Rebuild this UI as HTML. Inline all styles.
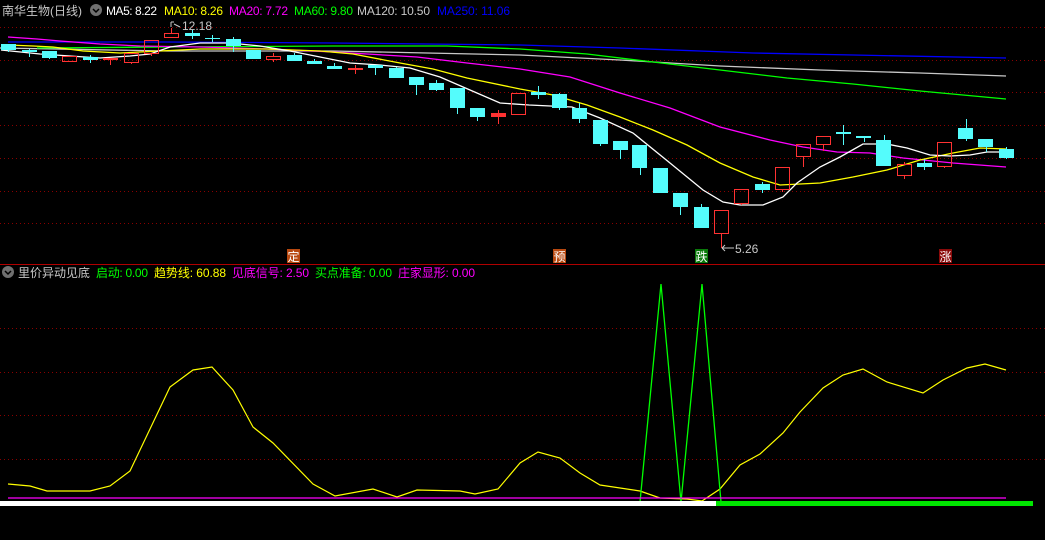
<!DOCTYPE html>
<html><head><meta charset="utf-8"><style>
html,body{margin:0;padding:0;background:#000;width:1045px;height:540px;overflow:hidden}
svg{display:block}
text{font-family:"Liberation Sans","Noto Sans CJK SC",sans-serif}
</style></head><body>
<svg width="1045" height="540" viewBox="0 0 1045 540" xmlns="http://www.w3.org/2000/svg">
<rect width="1045" height="540" fill="#000"/>
<g stroke="#8a0000" stroke-width="1" stroke-dasharray="1,3">
<line x1="0" y1="27.5" x2="1045" y2="27.5"/><line x1="0" y1="60.5" x2="1045" y2="60.5"/>
<line x1="0" y1="92.5" x2="1045" y2="92.5"/><line x1="0" y1="125.5" x2="1045" y2="125.5"/>
<line x1="0" y1="158.5" x2="1045" y2="158.5"/><line x1="0" y1="191.5" x2="1045" y2="191.5"/>
<line x1="0" y1="223.5" x2="1045" y2="223.5"/>
<line x1="0" y1="328.5" x2="1045" y2="328.5"/><line x1="0" y1="372.5" x2="1045" y2="372.5"/>
<line x1="0" y1="415.5" x2="1045" y2="415.5"/><line x1="0" y1="459.5" x2="1045" y2="459.5"/>
</g>
<line x1="0" y1="264.5" x2="1045" y2="264.5" stroke="#b00000"/>

<!-- header -->
<text x="2" y="15" font-size="12" fill="#c8c8c8">南华生物(日线)</text>
<circle cx="96" cy="10" r="6" fill="#707070"/><path d="M93 9 L96 12 L99 9" stroke="#000" stroke-width="1.5" fill="none"/>
<text x="106" y="15" font-size="12" fill="#fff" textLength="51">MA5: 8.22</text>
<text x="164" y="15" font-size="12" fill="#ffff00" textLength="59">MA10: 8.26</text>
<text x="229" y="15" font-size="12" fill="#ff00ff" textLength="59">MA20: 7.72</text>
<text x="294" y="15" font-size="12" fill="#00ff00" textLength="59">MA60: 9.80</text>
<text x="357" y="15" font-size="12" fill="#c8c8c8" textLength="73">MA120: 10.50</text>
<text x="437" y="15" font-size="12" fill="#0000ff" textLength="73">MA250: 11.06</text>

<!-- MA lines -->
<g fill="none" stroke-width="1.3">
<polyline stroke="#0000ff" points="8,42 167,42 333,43 427,44 520,45 620,48 753,53 853,55 1006,58"/>
<polyline stroke="#c8c8c8" points="0,48 167,51 333,51 427,53 520,55 620,60 720,66 820,70 920,73 1006,76"/>
<polyline stroke="#00ff00" points="37,48 167,47 333,46 447,46 520,49 587,54 653,62 720,70 787,78 853,84 920,91 1006,99"/>
<polyline stroke="#ff00ff" points="8,37 37,39 60,41 100,44 140,46 200,47 267,49 333,52 367,54 417,57 467,63 520,69 570,77 620,93 670,108 720,127 770,140 803,147 837,152 870,153 903,158 953,163 1006,167"/>
<polyline stroke="#ffff00" points="8,45 33,46 53,47 83,51 120,53 160,51 200,49 267,49 320,51 353,54 400,63 433,69 467,78 520,89 553,95 587,105 620,117 653,130 687,145 720,163 753,177 780,185 820,183 853,177 887,170 920,160 953,153 980,148 1006,149"/>
<polyline stroke="#ffffff" points="1,50 40,54 70,56 100,58 130,56 150,54 170,47 200,43 230,43 260,46 290,51 320,57 350,63 380,65 410,68 440,77 470,90 500,103 529,105 572,107 600,118 633,133 670,163 703,190 723,202 740,205 763,205 783,197 797,183 820,167 840,157 863,144 887,144 907,148 930,155 950,156 970,155 987,152 1006,152"/>
</g>

<!-- candles -->
<g stroke="#54fcfc" stroke-width="1">
<line x1="8.5" y1="44" x2="8.5" y2="52"/><line x1="29.5" y1="49" x2="29.5" y2="57"/><line x1="49.5" y1="51" x2="49.5" y2="59"/>
<line x1="90.5" y1="55" x2="90.5" y2="63"/><line x1="192.5" y1="30" x2="192.5" y2="39"/><line x1="212.5" y1="35" x2="212.5" y2="42"/>
<line x1="233.5" y1="37" x2="233.5" y2="52"/><line x1="294.5" y1="53" x2="294.5" y2="61"/><line x1="314.5" y1="59" x2="314.5" y2="64"/>
<line x1="334.5" y1="63" x2="334.5" y2="69"/><line x1="375.5" y1="65" x2="375.5" y2="75"/><line x1="396.5" y1="67" x2="396.5" y2="78"/>
<line x1="416.5" y1="77" x2="416.5" y2="95"/><line x1="436.5" y1="80" x2="436.5" y2="91"/><line x1="457.5" y1="88" x2="457.5" y2="114"/>
<line x1="477.5" y1="108" x2="477.5" y2="121"/><line x1="538.5" y1="86" x2="538.5" y2="99"/><line x1="559.5" y1="93" x2="559.5" y2="110"/>
<line x1="579.5" y1="103" x2="579.5" y2="123"/><line x1="600.5" y1="120" x2="600.5" y2="146"/><line x1="620.5" y1="141" x2="620.5" y2="159"/>
<line x1="640.5" y1="145" x2="640.5" y2="175"/><line x1="680.5" y1="193" x2="680.5" y2="215"/><line x1="701.5" y1="204" x2="701.5" y2="228"/>
<line x1="762.5" y1="182" x2="762.5" y2="193"/><line x1="843.5" y1="125" x2="843.5" y2="145"/><line x1="864.5" y1="136" x2="864.5" y2="142"/>
<line x1="884.5" y1="135" x2="884.5" y2="166"/><line x1="924.5" y1="159" x2="924.5" y2="170"/><line x1="966.5" y1="119" x2="966.5" y2="141"/>
<line x1="986.5" y1="139" x2="986.5" y2="152"/><line x1="1006.5" y1="147" x2="1006.5" y2="159"/>
</g>
<g fill="#54fcfc">
<rect x="1" y="44" width="15" height="6"/><rect x="22" y="50" width="15" height="2"/><rect x="42" y="51" width="15" height="7"/>
<rect x="83" y="57" width="15" height="3"/><rect x="185" y="33" width="15" height="3"/><rect x="205" y="38" width="15" height="1"/>
<rect x="226" y="39" width="15" height="7"/><rect x="246" y="50" width="15" height="9"/><rect x="287" y="55" width="15" height="6"/>
<rect x="307" y="61" width="15" height="3"/><rect x="327" y="66" width="15" height="3"/><rect x="368" y="65" width="15" height="3"/>
<rect x="389" y="68" width="15" height="10"/><rect x="409" y="77" width="15" height="8"/><rect x="429" y="83" width="15" height="7"/>
<rect x="450" y="88" width="15" height="20"/><rect x="470" y="108" width="15" height="9"/><rect x="531" y="92" width="15" height="3"/>
<rect x="552" y="94" width="15" height="14"/><rect x="572" y="108" width="15" height="11"/><rect x="593" y="120" width="15" height="24"/>
<rect x="613" y="141" width="15" height="9"/><rect x="632" y="145" width="15" height="23"/><rect x="653" y="168" width="15" height="25"/>
<rect x="673" y="193" width="15" height="14"/><rect x="694" y="207" width="15" height="21"/><rect x="755" y="184" width="15" height="6"/>
<rect x="836" y="132" width="15" height="2"/><rect x="856" y="136" width="15" height="2"/><rect x="876" y="140" width="15" height="26"/>
<rect x="917" y="163" width="15" height="4"/><rect x="958" y="128" width="15" height="11"/><rect x="978" y="139" width="15" height="8"/>
<rect x="999" y="149" width="15" height="9"/>
</g>
<g stroke="#ff3232" stroke-width="1" fill="none">
<rect x="62.5" y="56.5" width="14" height="5"/>
<line x1="110.5" y1="58" x2="110.5" y2="65"/><rect x="103" y="58" width="15" height="2" fill="#ff3232" stroke="none"/>
<rect x="124.5" y="53.5" width="14" height="9"/><line x1="131.5" y1="63" x2="131.5" y2="64"/>
<rect x="144.5" y="40.5" width="14" height="13"/><line x1="151.5" y1="54" x2="151.5" y2="56"/>
<rect x="164.5" y="33.5" width="14" height="4"/><line x1="171.5" y1="28" x2="171.5" y2="33"/>
<rect x="266.5" y="56.5" width="14" height="3"/><line x1="273.5" y1="53" x2="273.5" y2="56"/><line x1="273.5" y1="60" x2="273.5" y2="62"/>
<line x1="355.5" y1="65" x2="355.5" y2="74"/><rect x="348" y="68" width="15" height="2" fill="#ff3232" stroke="none"/>
<line x1="498.5" y1="110" x2="498.5" y2="124"/><rect x="491" y="113" width="15" height="4" fill="#ff3232" stroke="none"/>
<rect x="511.5" y="93.5" width="14" height="21"/>
<rect x="714.5" y="210.5" width="14" height="23"/><line x1="721.5" y1="234" x2="721.5" y2="248"/>
<rect x="734.5" y="189.5" width="14" height="14"/><line x1="741.5" y1="204" x2="741.5" y2="205"/>
<rect x="775.5" y="167.5" width="14" height="22"/><line x1="782.5" y1="190" x2="782.5" y2="192"/>
<rect x="796.5" y="144.5" width="14" height="12"/><line x1="803.5" y1="157" x2="803.5" y2="167"/>
<rect x="816.5" y="136.5" width="14" height="8"/><line x1="823.5" y1="145" x2="823.5" y2="151"/>
<rect x="897.5" y="164.5" width="14" height="11"/><line x1="904.5" y1="162" x2="904.5" y2="164"/><line x1="904.5" y1="176" x2="904.5" y2="179"/>
<rect x="937.5" y="142.5" width="14" height="24"/><line x1="944.5" y1="167" x2="944.5" y2="168"/>
</g>

<!-- annotations -->
<path d="M171 22 L171 27 M171 22 L174 22 M174 24 L180 27" stroke="#c8c8c8" fill="none"/>
<text x="182" y="30" font-size="12" fill="#c8c8c8">12.18</text>
<path d="M722 248 L734 248 M722 248 L725 245 M722 248 L725 251" stroke="#c8c8c8" fill="none"/>
<text x="735" y="253" font-size="12" fill="#c8c8c8">5.26</text>

<rect x="287" y="249" width="13" height="14" fill="#b8480f"/><text x="287.5" y="261" font-size="12" fill="#fff">定</text>
<rect x="553" y="249" width="13" height="14" fill="#b8480f"/><text x="553.5" y="261" font-size="12" fill="#fff">预</text>
<rect x="695" y="249" width="13" height="14" fill="#0a7a0a"/><text x="695.5" y="261" font-size="12" fill="#fff">跌</text>
<rect x="939" y="249" width="13" height="14" fill="#8a0a0a"/><text x="939.5" y="261" font-size="12" fill="#fff">涨</text>

<!-- lower header -->
<circle cx="8" cy="272" r="6" fill="#707070"/><path d="M5 271 L8 274 L11 271" stroke="#000" stroke-width="1.5" fill="none"/>
<text x="18" y="277" font-size="12" fill="#c8c8c8">里价异动见底</text>
<text x="96" y="277" font-size="12" fill="#00ff00" textLength="52">启动: 0.00</text>
<text x="154" y="277" font-size="12" fill="#ffff00" textLength="72">趋势线: 60.88</text>
<text x="232" y="277" font-size="12" fill="#ff00ff" textLength="77">见底信号: 2.50</text>
<text x="315" y="277" font-size="12" fill="#00ff00" textLength="77">买点准备: 0.00</text>
<text x="398" y="277" font-size="12" fill="#ff00ff" textLength="77">庄家显形: 0.00</text>

<!-- lower panel -->
<polyline fill="none" stroke="#ffff00" stroke-width="1.2" points="8,484 30,486 47,491 90,491 110,486 130,471 170,387 193,370 212,367 233,390 253,427 273,443 313,484 335,496 373,489 397,497 417,490 460,491 475,494 498,489 520,463 538,452 560,458 580,473 600,485 640,491 660,498 687,499 702,501 720,489 740,465 760,454 783,433 800,412 823,388 843,375 863,369 887,382 923,393 943,380 967,368 985,364 1006,370"/>
<polyline fill="none" stroke="#00ff00" stroke-width="1.3" points="640,502 661,284 681,502 702,284 721,502"/>
<line x1="8" y1="498" x2="1006" y2="498" stroke="#ff00ff" stroke-width="1.3"/>
<rect x="0" y="501" width="716" height="5" fill="#ffffff"/>
<rect x="716" y="501" width="317" height="5" fill="#00e600"/>
</svg>
</body></html>
